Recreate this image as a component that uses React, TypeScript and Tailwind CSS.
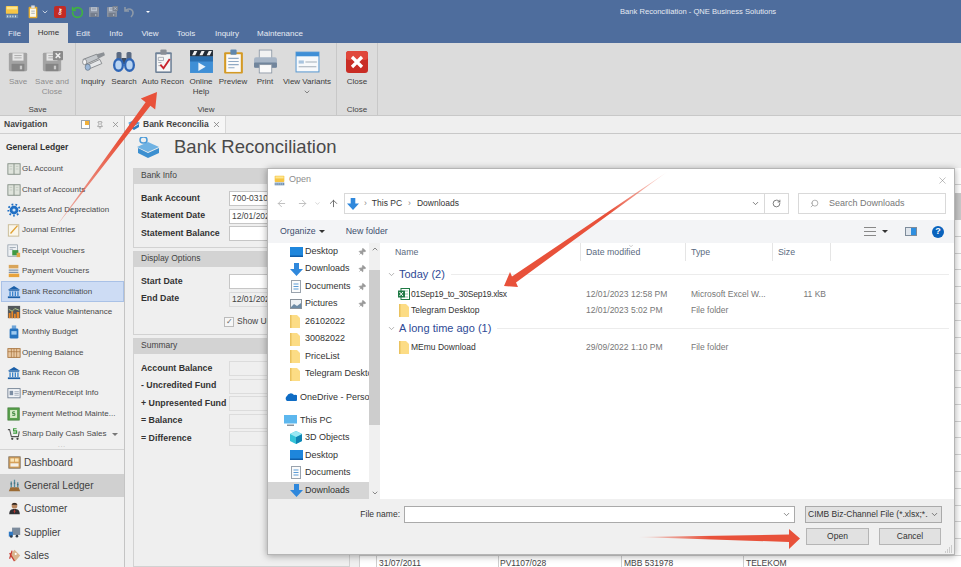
import type { ReactNode } from "react";
import { ArrowLeft, ArrowRight, ArrowUp, ChevronDown, ChevronUp, Pin, RotateCw, Search, X } from "lucide-react";

const FONT = { fontFamily: '"Liberation Sans", Arial, sans-serif' };

function Ico({ s = 14, vb = 16, children, className = "" }: { s?: number; vb?: number; children: ReactNode; className?: string }) {
  return (
    <svg width={s} height={s} viewBox={`0 0 ${vb} ${vb}`} className={`shrink-0 ${className}`}>
      {children}
    </svg>
  );
}

/* ---------- ribbon icons (24 box) ---------- */
function Floppy({ s = 22, badge = false }: { s?: number; badge?: boolean }) {
  return (
    <Ico s={s} vb={24}>
      <rect x="2" y="2" width="20" height="20" rx="1.5" fill="#a3a3a3" />
      <rect x="6" y="2.5" width="12" height="8" fill="#e6e6e6" />
      <rect x="8" y="4.5" width="8" height="1" fill="#a9a9a9" />
      <rect x="8" y="7" width="8" height="1" fill="#a9a9a9" />
      <rect x="5" y="14" width="14" height="8" fill="#858585" />
      <rect x="14" y="16" width="2.5" height="4" fill="#c9c9c9" />
      {badge && (
        <>
          <rect x="13" y="0" width="11" height="10" rx="1" fill="#8a8a8a" />
          <path d="M16 2.5l5 5M21 2.5l-5 5" stroke="#eee" strokeWidth="1.6" />
        </>
      )}
    </Ico>
  );
}

function Telescope() {
  return (
    <Ico s={25} vb={24}>
      <path d="M2 10l13-5 2 4-13 6z" fill="#c4c8cc" stroke="#6e7276" strokeWidth=".7" />
      <path d="M5 16l13-6 2 4-12 5z" fill="#e6e8ea" stroke="#6e7276" strokeWidth=".7" />
      <path d="M15 5l7-2 1 3-6 3z" fill="#8c9095" />
      <ellipse cx="6.500" cy="17.500" rx="2.500" ry="3" fill="#9db8d8" stroke="#5c6b7c" strokeWidth=".6" />
      <ellipse cx="3.500" cy="12.500" rx="2" ry="2.600" fill="#f2f2f2" stroke="#6e7276" strokeWidth=".6" />
    </Ico>
  );
}

function Binoculars() {
  return (
    <Ico s={24} vb={24}>
      <rect x="4.500" y="2" width="5" height="8" rx="1.500" fill="#5a6a82" />
      <rect x="14.500" y="2" width="5" height="8" rx="1.500" fill="#5a6a82" />
      <rect x="9.500" y="8" width="5" height="6" fill="#3f4d63" />
      <ellipse cx="6.500" cy="15" rx="5.500" ry="7" fill="#2f66b6" />
      <ellipse cx="17.500" cy="15" rx="5.500" ry="7" fill="#2f66b6" />
      <ellipse cx="6.500" cy="15" rx="3.200" ry="4.600" fill="#b9d4f2" />
      <ellipse cx="17.500" cy="15" rx="3.200" ry="4.600" fill="#b9d4f2" />
    </Ico>
  );
}

function ClipRecon() {
  return (
    <Ico s={25} vb={24}>
      <rect x="4" y="3" width="16" height="20" rx="1" fill="#6f8298" />
      <rect x="5.500" y="5" width="13" height="16.500" fill="#f5f5f5" />
      <rect x="9" y="0.500" width="6" height="5" rx="1" fill="#8a8f96" />
      <path d="M7 8h5v3H7zM7 13h3M7 16h3" stroke="#9ca3ad" strokeWidth=".8" fill="none" />
      <path d="M9 15l3 3.500 6-9" stroke="#c8232c" strokeWidth="1.800" fill="none" />
    </Ico>
  );
}

function Clapper() {
  return (
    <Ico s={25} vb={24}>
      <rect x="1" y="7" width="22" height="16" fill="#3f8fd6" />
      <rect x="1" y="7" width="22" height="5" fill="#2a6fb0" />
      <rect x="1" y="1" width="22" height="6" fill="#222b36" />
      <path d="M3 6l2-4h3l-2 4zM10 6l2-4h3l-2 4zM17 6l2-4h3l-2 4z" fill="#f1f1f1" />
      <path d="M9 13l7 4-7 4z" fill="#e9f3fb" />
    </Ico>
  );
}

function Preview() {
  return (
    <Ico s={25} vb={24}>
      <rect x="3" y="3" width="18" height="20.500" rx="1" fill="#d49a25" />
      <rect x="5" y="5" width="14" height="17" fill="#fbfbfb" />
      <rect x="9" y="0.500" width="6" height="5" rx="1" fill="#5f87ad" />
      <path d="M7 9h10M7 12h10M7 15h10M7 18h6" stroke="#8fa9c4" strokeWidth="1" />
    </Ico>
  );
}

function Printer() {
  return (
    <Ico s={25} vb={24}>
      <rect x="6" y="1" width="12" height="9" fill="#f2f2f2" stroke="#8995a3" strokeWidth=".8" />
      <rect x="1" y="8" width="22" height="10" rx="2" fill="#a7b5c6" />
      <rect x="1" y="13" width="22" height="5" rx="1" fill="#71859c" />
      <rect x="6" y="15" width="12" height="8" fill="#fafafa" stroke="#8995a3" strokeWidth=".8" />
    </Ico>
  );
}

function Variants() {
  return (
    <Ico s={25} vb={24}>
      <rect x="1" y="3" width="22" height="19" fill="#f7f9fb" stroke="#5d9bd1" strokeWidth="1" />
      <rect x="1" y="3" width="22" height="4" fill="#3f8fd6" />
      <rect x="3.500" y="11" width="5" height="3" fill="#a8c4df" />
      <path d="M10 12.500h11M3.500 17h17" stroke="#a2adb8" strokeWidth="1" />
    </Ico>
  );
}

function CloseRed() {
  return (
    <Ico s={24} vb={24}>
      <rect x="1" y="1" width="22" height="22" rx="3" fill="#c92d25" />
      <rect x="1" y="1" width="22" height="9" rx="3" fill="#e0473b" />
      <path d="M7 7l10 10M17 7L7 17" stroke="#fff" strokeWidth="3.200" />
    </Ico>
  );
}

/* ---------- quick access + nav icons ---------- */
function Monitor({ s = 14 }: { s?: number }) {
  return (
    <Ico s={s}>
      <rect x="1" y="1" width="14" height="9" rx="1" fill="#f6c544" />
      <rect x="2" y="2" width="12" height="3" fill="#fde68f" />
      <rect x="1" y="11" width="14" height="4" fill="#6f8fb0" />
      <path d="M3 12v2M6 12v2M9 12v2M12 12v2" stroke="#e6edf5" strokeWidth="1" />
    </Ico>
  );
}

function QatClip() {
  return (
    <Ico s={14}>
      <rect x="3" y="2" width="10" height="13" rx="1" fill="#e3a92c" />
      <rect x="4.500" y="4" width="7" height="9.500" fill="#fbf7e7" />
      <rect x="6" y="0.500" width="4" height="3" fill="#d9dde3" />
      <path d="M6 7h4M6 9.500h4" stroke="#8a97a8" strokeWidth=".8" />
    </Ico>
  );
}

function Book() {
  return (
    <Ico>
      <rect x="1" y="2" width="14" height="12" fill="#dfe4dc" stroke="#7e8a80" strokeWidth="1" />
      <path d="M8 2v12" stroke="#7e8a80" strokeWidth="1" />
      <path d="M3 5h3M3 8h3M10 5h3M10 8h3" stroke="#b9c2b7" strokeWidth=".8" />
    </Ico>
  );
}

function Bank() {
  return (
    <Ico>
      <path d="M8 1L1 5.500h14z" fill="#1a5fa8" />
      <rect x="2" y="6" width="12" height="1" fill="#1a5fa8" />
      <path d="M3.500 7.500v5M6.500 7.500v5M9.500 7.500v5M12.500 7.500v5" stroke="#2d7cc9" strokeWidth="1.400" />
      <rect x="1" y="13" width="14" height="2" fill="#1a5fa8" />
    </Ico>
  );
}

const NAV_ICONS: Record<string, ReactNode> = {
  gl: <Book />,
  gear: (
    <Ico>
      <circle cx="8" cy="8" r="5" fill="#1f6fc4" />
      <circle cx="8" cy="8" r="6.500" fill="none" stroke="#1f6fc4" strokeWidth="2" strokeDasharray="2 2.500" />
      <circle cx="8" cy="8" r="1.800" fill="#cfe3f7" />
    </Ico>
  ),
  journal: (
    <Ico>
      <rect x="1.500" y="2" width="12" height="13" fill="#faf6ea" stroke="#c5b68f" strokeWidth="1" />
      <path d="M4 12l8-9" stroke="#e0a030" strokeWidth="1.500" />
    </Ico>
  ),
  receipt: (
    <Ico>
      <rect x="1" y="1" width="11" height="13" fill="#eef1f4" stroke="#8793a2" strokeWidth=".8" />
      <path d="M3 4h7M3 6h4" stroke="#8793a2" strokeWidth=".8" />
      <rect x="6" y="7" width="7" height="6" fill="#3f9a45" />
      <rect x="11" y="10" width="4" height="5" fill="#e0a94a" />
    </Ico>
  ),
  payment: (
    <Ico>
      <rect x="2" y="1" width="11" height="4" fill="#d9a55a" />
      <path d="M2 7h11M2 9.500h11" stroke="#7f93ab" strokeWidth="1.400" />
      <rect x="2" y="11" width="12" height="4" fill="#e8a33c" />
    </Ico>
  ),
  bank: <Bank />,
  stock: (
    <Ico>
      <rect x="1" y="1" width="14" height="14" fill="#54585c" />
      <path d="M2 15V9h2v6zM5 15V7h2v8zM8 15V10h2v5zM11 15V8h3v7z" fill="#e8882a" />
      <path d="M2 5l4 2 3-3 5 2" stroke="#b6d28a" strokeWidth="1" fill="none" />
    </Ico>
  ),
  budget: (
    <Ico>
      <rect x="5.500" y="0.500" width="5" height="4" fill="#6fa5d8" />
      <rect x="3" y="4" width="10" height="11.500" rx="1.500" fill="#2673bf" />
      <rect x="5" y="7" width="6" height="4" fill="#9fcaf0" />
    </Ico>
  ),
  opening: (
    <Ico>
      <rect x="1" y="3" width="14" height="10" fill="#e8c7a0" stroke="#a8743e" strokeWidth="1" />
      <path d="M5 3v10M8 3v10M11 3v10M1 6.500h14" stroke="#a8743e" strokeWidth=".8" />
    </Ico>
  ),
  info: (
    <Ico>
      <rect x="1" y="3" width="14" height="10.500" fill="#f2f4f7" stroke="#6e7d90" strokeWidth="1" />
      <rect x="3" y="5.500" width="4" height="5" fill="#7d8ea3" />
      <path d="M8.500 6.500h5M8.500 8.500h5M8.500 10.500h5" stroke="#8b98a8" strokeWidth=".8" />
    </Ico>
  ),
  method: (
    <Ico>
      <rect x="1" y="1" width="13" height="14" fill="#5aa04d" stroke="#3d7a35" strokeWidth=".8" />
      <rect x="3.500" y="3.500" width="8" height="9" fill="#d8ecc9" />
      <path d="M9 5.500H6.500v2H9v2H6" stroke="#2c7a2c" strokeWidth="1" fill="none" />
    </Ico>
  ),
  cart: (
    <Ico>
      <path d="M1 3h2l2 8h8l1-6" stroke="#555" strokeWidth="1.200" fill="none" />
      <circle cx="6" cy="13.500" r="1.300" fill="#444" />
      <circle cx="12" cy="13.500" r="1.300" fill="#444" />
      <path d="M11 2H7.500v2.500H11V7H7" stroke="#3a9a3a" strokeWidth="1.300" fill="none" />
    </Ico>
  ),
};

const NAV_ITEMS: [string, string][] = [
  ["gl", "GL Account"],
  ["gl", "Chart of Accounts"],
  ["gear", "Assets And Depreciation"],
  ["journal", "Journal Entries"],
  ["receipt", "Receipt Vouchers"],
  ["payment", "Payment Vouchers"],
  ["bank", "Bank Reconciliation"],
  ["stock", "Stock Value Maintenance"],
  ["budget", "Monthly Budget"],
  ["opening", "Opening Balance"],
  ["bank", "Bank Recon OB"],
  ["info", "Payment/Receipt Info"],
  ["method", "Payment Method Mainte..."],
  ["cart", "Sharp Daily Cash Sales"],
];

const MODULES: [ReactNode, string, boolean][] = [
  [
    <Ico s={13} key="d">
      <rect x="1" y="1" width="14" height="14" fill="#d6a15a" stroke="#7b6a55" strokeWidth="1" />
      <rect x="3" y="3" width="4.500" height="4" fill="#fbe6b8" />
      <rect x="8.500" y="3" width="4.500" height="4" fill="#fbe6b8" />
      <rect x="3" y="9" width="10" height="4" fill="#f4f1ea" />
    </Ico>,
    "Dashboard",
    false,
  ],
  [
    <Ico s={13} key="g">
      <path d="M1 15l2-5h10l2 5z" fill="#9b6b34" />
      <path d="M4 10V3M8 10V1M12 10V4" stroke="#4f8d9c" strokeWidth="1.600" />
      <path d="M3 6h2M7 5h2M11 7h2" stroke="#4a5968" strokeWidth="1" />
    </Ico>,
    "General Ledger",
    true,
  ],
  [
    <Ico s={13} key="c">
      <circle cx="8" cy="4.500" r="3.500" fill="#b8865f" />
      <path d="M4.500 3.500C5 0.500 11 0.500 11.500 3.500z" fill="#2c2521" />
      <path d="M1.500 15c0-5 2.500-6.500 6.500-6.500s6.500 1.500 6.500 6.500z" fill="#2f2f33" />
      <path d="M8 8.500l-1 3 1 3 1-3z" fill="#b3352d" />
    </Ico>,
    "Customer",
    false,
  ],
  [
    <Ico s={13} key="s">
      <rect x="5" y="2" width="10" height="9" fill="#7c8b9c" />
      <path d="M1 7h5v6H1z" fill="#2d78c4" />
      <circle cx="4" cy="13" r="1.600" fill="#2f3b48" />
      <circle cx="11" cy="12.500" r="1.600" fill="#2f3b48" />
    </Ico>,
    "Supplier",
    false,
  ],
  [
    <Ico s={13} key="a">
      <path d="M8 1l7 7-6 7-7-7z" fill="#d9b48e" />
      <path d="M2 5l6 10M5 2l-3 10" stroke="#c73c32" strokeWidth="1.500" />
      <circle cx="9.500" cy="6" r="1.300" fill="#fff" />
    </Ico>,
    "Sales",
    false,
  ],
];

const RIBBON_VIEW: [ReactNode, string[], number][] = [
  [<Telescope key="1" />, ["Inquiry"], 30],
  [<Binoculars key="2" />, ["Search"], 32],
  [<ClipRecon key="3" />, ["Auto Recon"], 46],
  [<Clapper key="4" />, ["Online", "Help"], 30],
  [<Preview key="5" />, ["Preview"], 34],
  [<Printer key="6" />, ["Print"], 30],
  [<Variants key="7" />, ["View Variants"], 54],
];

const TABS: [string, number][] = [
  ["File", 29],
  ["Home", 39],
  ["Edit", 30],
  ["Info", 36],
  ["View", 32],
  ["Tools", 40],
  ["Inquiry", 42],
  ["Maintenance", 64],
];

function RibbonBtn({ icon, lines, w, muted, chevron }: { icon: ReactNode; lines: string[]; w: number; muted?: boolean; chevron?: boolean }) {
  return (
    <div style={{ width: w }} className={`flex flex-col items-center pt-[5px] text-[8px] leading-[10px] whitespace-nowrap ${muted ? "text-[#8d8d8d]" : "text-[#3c3c3c]"}`}>
      <div className="flex h-[27px] items-center justify-center">{icon}</div>
      <div className="mt-[2px]">{lines[0]}</div>
      {lines[1] && <div>{lines[1]}</div>}
      {chevron && <ChevronDown size={8} className="mt-[1px] text-[#555]" />}
    </div>
  );
}

function RibbonGroup({ title, w, children }: { title: string; w: number; children: ReactNode }) {
  return (
    <div style={{ width: w }} className="flex h-full flex-col border-r border-[#c8c8c8]">
      <div className="flex flex-1">{children}</div>
      <div className="text-center text-[8px] leading-[11px] text-[#444]">{title}</div>
    </div>
  );
}

function Field({ label, value, disabled }: { label: string; value?: string; disabled?: boolean }) {
  return (
    <div className="flex h-[15px] items-center">
      <div className="w-[88px] shrink-0 whitespace-nowrap text-[8.800px] font-bold text-[#333]">{label}</div>
      <div className={`h-[15px] w-[120px] border px-[2px] text-[8.500px] leading-[13px] text-[#444] ${disabled ? "border-[#dcdcdc] bg-[#efefef]" : "border-[#c6c6c6] bg-white"}`}>{value}</div>
    </div>
  );
}

function Panel({ title, grow, children }: { title: string; grow?: boolean; children: ReactNode }) {
  return (
    <div className={`border border-[#d2d2d2] ${grow ? "flex-1" : ""}`}>
      <div className="h-[15px] bg-[#d3d3d3] pl-[7px] text-[8.500px] leading-[13px] text-[#444]">{title}</div>
      <div className="flex flex-col gap-[2.500px] pt-[7px] pb-[6px] pl-[7px]">{children}</div>
    </div>
  );
}

function Sidebar() {
  return (
    <div className="flex w-[125px] shrink-0 flex-col overflow-hidden border-r border-[#c4c4c4] bg-[#f0f0f0]">
      <div className="flex h-[18px] shrink-0 items-center border-b border-[#cfcfcf] pl-[4px] pr-[4px] text-[8.500px] font-bold text-[#444]">
        <span className="flex-1">Navigation</span>
        <svg width="9" height="9" viewBox="0 0 9 9" className="mr-[6px]">
          <rect x=".5" y=".5" width="8" height="8" fill="#fff" stroke="#9aa3ad" />
          <rect x="4" y="1" width="4" height="4" fill="#f2b13a" />
        </svg>
        <Pin size={8} className="mr-[7px] text-[#888]" />
        <X size={9} className="text-[#888]" />
      </div>
      <div className="flex h-[26px] shrink-0 items-center pl-[6px] text-[8.500px] font-bold text-[#333]">General Ledger</div>
      <div className="-mt-[1px] flex flex-col">
        {NAV_ITEMS.map(([ic, label], i) => (
          <div key={label} className={`flex h-[20.400px] items-center gap-[1px] text-[8px] whitespace-nowrap text-[#4a4a4a] ${label === "Bank Reconciliation" ? "ml-[1px] border border-[#a9c1e6] bg-[#cddcf4] pl-[5px]" : "pl-[7px]"}`}>
            {NAV_ICONS[ic]}
            <span className="flex-1">{label}</span>
            {i === 13 && <span className="mr-[6px] h-0 w-0 border-x-[3px] border-t-[3px] border-x-transparent border-t-[#777]" />}
          </div>
        ))}
      </div>
      <div className="flex h-[5px] shrink-0 items-start justify-center text-[6px] leading-[3px] tracking-[1px] text-[#999]">...</div>
      <div className="flex flex-col border-t border-[#d4d4d4]">
        {MODULES.map(([icon, label, active]) => (
          <div key={label} className={`flex h-[23.400px] items-center gap-[3px] pl-[8px] text-[10px] text-[#3f3f3f] ${active ? "bg-[#d0d0d0]" : ""}`}>
            {icon}
            <span>{label}</span>
          </div>
        ))}
      </div>
    </div>
  );
}

function LeftForms() {
  return (
    <div className="flex w-[217px] shrink-0 flex-col gap-[3px]">
      <Panel title="Bank Info">
        <Field label="Bank Account" value="700-0310-" />
        <Field label="Statement Date" value="12/01/2023" />
        <Field label="Statement Balance" />
      </Panel>
      <Panel title="Display Options">
        <Field label="Start Date" />
        <Field label="End Date" value="12/01/2023" disabled />
        <div className="mt-[6px] flex h-[13px] items-center pl-[83px] text-[8.500px] text-[#444]">
          <span className="mr-[3px] flex h-[10px] w-[10px] items-center justify-center border border-[#bbb] bg-[#f6f6f6] text-[8px] leading-none text-[#666]">✓</span>
          Show Un
        </div>
      </Panel>
      <Panel title="Summary" grow>
        <Field label="Account Balance" disabled />
        <Field label="- Uncredited Fund" disabled />
        <Field label="+ Unpresented Fund" disabled />
        <Field label="= Balance" disabled />
        <Field label="= Difference" disabled />
      </Panel>
    </div>
  );
}

function BackTable() {
  return (
    <div className="ml-[9px] flex-1 border-l border-[#d0d0d0] bg-white text-[8.500px] text-[#444]">
      <div className="h-[17px] border-b border-[#d4d4d4]" />
      <div className="h-[8px]" />
      <div className="h-[27px] bg-[#c9c9c9]" />
      {Array.from({ length: 20 }).map((_, i) => (
        <div key={i} className="h-[16.800px] border-b border-[#d4d4d4]" />
      ))}
      <div className="grid h-[16.800px] grid-cols-[16px_122px_123px_122px_1fr] leading-[14px]">
        <div />
        <div className="border-l border-[#cfcfcf] pl-[2px]">31/07/2011</div>
        <div className="border-l border-[#cfcfcf] pl-[1px]">PV1107/028</div>
        <div className="border-l border-[#cfcfcf] pl-[2px]">MBB 531978</div>
        <div className="border-l border-[#cfcfcf] pl-[2px]">TELEKOM</div>
      </div>
    </div>
  );
}

/* ---------- file dialog ---------- */
function Folder() {
  return (
    <svg width="10" height="13" viewBox="0 0 10 13" className="shrink-0">
      <path d="M0 0h7l3 3v10H0z" fill="#fcdc85" />
      <path d="M0 0h1.500v13H0z" fill="#eac25f" />
    </svg>
  );
}

function DownArrow({ s = 13 }: { s?: number }) {
  return (
    <svg width={s} height={s} viewBox="0 0 13 13" className="shrink-0">
      <path d="M4 0h5v6h4l-6.500 7L0 6h4z" fill="#2f88dc" />
    </svg>
  );
}

function DesktopIco() {
  return (
    <svg width="13" height="10" viewBox="0 0 13 10" className="shrink-0">
      <rect width="13" height="10" fill="#1e86dc" />
      <rect y="8.500" width="13" height="1.500" fill="#0e5ca8" />
    </svg>
  );
}

function DocIco() {
  return (
    <svg width="10" height="13" viewBox="0 0 10 13" className="ml-[1px] shrink-0">
      <rect x=".5" y=".5" width="9" height="12" fill="#fbfbfb" stroke="#9aa3ad" />
      <path d="M2.500 4h5M2.500 6.500h5M2.500 9h5" stroke="#5b9bd5" strokeWidth="1" />
    </svg>
  );
}

function PicIco() {
  return (
    <svg width="12" height="10" viewBox="0 0 12 10" className="shrink-0">
      <rect x=".5" y=".5" width="11" height="9" fill="#eef1f4" stroke="#8a929b" />
      <path d="M1 8l3-3 3 2 4-3v5H1z" fill="#6c8aa5" />
    </svg>
  );
}

function Cube() {
  return (
    <svg width="12" height="13" viewBox="0 0 12 13" className="shrink-0">
      <path d="M6 0l6 3v7l-6 3-6-3V3z" fill="#35c3d8" />
      <path d="M6 6v7l6-3V3z" fill="#0f84b4" />
      <path d="M6 0l6 3-6 3-6-3z" fill="#9ae8f3" />
    </svg>
  );
}

const QUICK: [ReactNode, string, boolean][] = [
  [<DesktopIco key="a" />, "Desktop", true],
  [<DownArrow key="b" />, "Downloads", true],
  [<DocIco key="c" />, "Documents", true],
  [<PicIco key="d" />, "Pictures", true],
  [<Folder key="e" />, "26102022", false],
  [<Folder key="f" />, "30082022", false],
  [<Folder key="g" />, "PriceList", false],
  [<Folder key="h" />, "Telegram Desktop", false],
];

const PC: [ReactNode, string, boolean][] = [
  [<Cube key="a" />, "3D Objects", false],
  [<DesktopIco key="b" />, "Desktop", false],
  [<DocIco key="c" />, "Documents", false],
  [<DownArrow key="d" />, "Downloads", false],
];

function TreeRow({ icon, label, pin, active }: { icon: ReactNode; label: string; pin?: boolean; active?: boolean }) {
  return (
    <div className={`flex h-[17.500px] items-center pl-[22px] text-[9px] text-[#333] ${active ? "bg-[#d5d5d5]" : ""}`}>
      <span className="flex w-[15px] shrink-0">{icon}</span>
      <span className="flex-1 overflow-hidden whitespace-nowrap">{label}</span>
      {pin && <Pin size={8} className="mr-[3px] shrink-0 rotate-45 fill-[#999] text-[#999]" />}
    </div>
  );
}

function FileRow({ icon, name, date, type, size, tight }: { icon: ReactNode; name: string; date: string; type: string; size?: string; tight?: boolean }) {
  return (
    <div className="flex h-[16px] items-center text-[8.500px] whitespace-nowrap">
      <span className="ml-[15px] flex w-[16px] shrink-0 justify-center pl-[2px]">{icon}</span>
      <span className={`w-[175px] shrink-0 text-[#333] ${tight ? "tracking-[-0.25px]" : ""}`}>{name}</span>
      <span className="w-[105px] shrink-0 text-[#777]">{date}</span>
      <span className="w-[87px] shrink-0 text-[#777]">{type}</span>
      <span className="w-[48px] text-right text-[#777]">{size}</span>
    </div>
  );
}

function GroupRow({ label, h }: { label: string; h: number }) {
  return (
    <div style={{ height: h }} className="flex items-center pl-[7px] pr-[5px] text-[11px] text-[#2e4a96]">
      <ChevronDown size={9} className="mr-[3px] text-[#999]" />
      <span className="whitespace-nowrap">{label}</span>
      <span className="ml-[6px] h-px flex-1 bg-[#ececec]" />
    </div>
  );
}

function OpenDialog() {
  return (
    <div className="absolute top-[168px] left-[267px] z-10 flex h-[387px] w-[688px] flex-col border border-[#b5b5b5] bg-white shadow-[0_1px_7px_rgba(0,0,0,0.35)]">
      <div className="flex h-[22px] shrink-0 items-center pl-[6px] pr-[6px] text-[9px] text-[#8d8d8d]">
        <Monitor s={11} />
        <span className="ml-[4px] flex-1">Open</span>
        <X size={11} strokeWidth={1} className="text-[#777]" />
      </div>
      <div className="flex h-[29px] shrink-0 items-start pt-[2px]">
        <div className="flex h-[21px] w-[76px] items-center pl-[8px] text-[#bbb]">
          <ArrowLeft size={11} className="mr-[10px]" />
          <ArrowRight size={11} className="mr-[6px]" />
          <ChevronDown size={7} className="mr-[7px]" />
          <ArrowUp size={11} className="text-[#666]" />
        </div>
        <div className="flex h-[21px] w-[445px] items-center border border-[#d9d9d9] pl-[2px] text-[8.500px] text-[#333]">
          <DownArrow s={12} />
          <span className="mx-[5px] text-[#888]">›</span>
          <span>This PC</span>
          <span className="mx-[6px] text-[#888]">›</span>
          <span className="flex-1">Downloads</span>
          <span className="flex h-full w-[11px] items-center"><ChevronDown size={9} className="text-[#555]" /></span>
          <span className="ml-[2px] flex h-full w-[24px] items-center justify-center border-l border-[#d9d9d9]"><RotateCw size={9} className="text-[#555]" /></span>
        </div>
        <div className="ml-[9px] flex h-[21px] w-[148px] items-center border border-[#d9d9d9] pl-[11px] text-[9px] text-[#777]">
          <Search size={9} className="mr-[10px] -scale-x-100 text-[#999]" />
          Search Downloads
        </div>
      </div>
      <div className="flex h-[23px] shrink-0 items-center bg-[#f3f4f6] pl-[12px] pr-[10px] text-[8.800px] text-[#3d4f6e]">
        <span>Organize</span>
        <span className="ml-[3px] h-0 w-0 border-x-[3px] border-t-[3px] border-x-transparent border-t-[#333]" />
        <span className="ml-[21px] flex-1">New folder</span>
        <span className="mr-[6px] flex h-[9px] w-[12px] flex-col justify-between">
          <span className="h-px bg-[#888]" />
          <span className="h-px bg-[#888]" />
          <span className="h-px bg-[#888]" />
        </span>
        <span className="mr-[17px] h-0 w-0 border-x-[3px] border-t-[3px] border-x-transparent border-t-[#333]" />
        <span className="mr-[15px] flex h-[9px] w-[12px] justify-end border border-[#7d8b9a] bg-[#dfe5ec]"><span className="w-[5px] bg-[#2f8fe0]" /></span>
        <span className="flex h-[12px] w-[12px] items-center justify-center rounded-full bg-[#0a63bd] text-[9px] leading-none font-bold text-white">?</span>
      </div>
      <div className="flex min-h-0 flex-1">
        <div className="flex w-[101px] shrink-0 flex-col overflow-hidden">
          {QUICK.map(([ic, l, p]) => (
            <TreeRow key={l} icon={ic} label={l} pin={p} />
          ))}
          <div className="h-[6px] shrink-0" />
          <div className="flex h-[17.500px] items-center gap-[3px] pl-[16px] text-[9px] whitespace-nowrap text-[#333]">
            <svg width="13" height="8" viewBox="0 0 13 8" className="shrink-0">
              <path d="M3 8a3 3 0 010-5 4 4 0 017-1 3 3 0 012 6z" fill="#0f6cc4" />
            </svg>
            OneDrive - Personal
          </div>
          <div className="h-[5.500px] shrink-0" />
          <div className="flex h-[17.500px] items-center gap-[3px] pl-[16px] text-[9px] text-[#333]">
            <svg width="13" height="11" viewBox="0 0 13 11" className="shrink-0">
              <rect width="13" height="8.500" fill="#5db7ee" />
              <rect x="3" y="9.500" width="7" height="1.500" fill="#8a939c" />
            </svg>
            This PC
          </div>
          {PC.map(([ic, l], i) => (
            <TreeRow key={l} icon={ic} label={l} active={i === 3} />
          ))}
        </div>
        <div className="flex w-[11px] shrink-0 flex-col items-center bg-[#f0f0f0]">
          <ChevronUp size={8} className="mt-[2px] h-[8px] text-[#555]" />
          <div className="mt-[17px] h-[155px] w-full bg-[#cdcdcd]" />
          <div className="flex-1" />
          <ChevronDown size={8} className="mb-[2px] text-[#555]" />
        </div>
        <div className="min-w-0 flex-1">
          <div className="flex h-[19px] items-start text-[8.800px] text-[#5a6a80]">
            <span className="w-[201px] border-r border-[#e5e5e5] pl-[15px] leading-[18px]">Name</span>
            <span className="relative w-[105px] border-r border-[#e5e5e5] pl-[5px] leading-[18px]">
              Date modified
              <ChevronUp size={6} className="absolute top-0 left-[47px] rotate-180 text-[#999]" />
            </span>
            <span className="w-[87px] border-r border-[#e5e5e5] pl-[5px] leading-[18px]">Type</span>
            <span className="w-[58px] border-r border-[#e5e5e5] pl-[5px] leading-[18px]">Size</span>
          </div>
          <GroupRow label="Today (2)" h={24} />
          <FileRow
            icon={
              <svg width="12" height="12" viewBox="0 0 12 12">
                <rect x="3" y="0.500" width="8.500" height="11" fill="#fff" stroke="#1f7a45" />
                <path d="M7 3h3M7 6h3M7 9h3" stroke="#8fc3a5" />
                <rect y="2.500" width="7" height="7" fill="#1f7a45" />
                <path d="M1.500 4l3.500 4M5 4L1.500 8" stroke="#fff" strokeWidth="1" />
              </svg>
            }
            name="01Sep19_to_30Sep19.xlsx"
            date="12/01/2023 12:58 PM"
            type="Microsoft Excel W..."
            size="11 KB"
            tight
          />
          <FileRow icon={<Folder />} name="Telegram Desktop" date="12/01/2023 5:02 PM" type="File folder" />
          <GroupRow label="A long time ago (1)" h={21} />
          <FileRow icon={<Folder />} name="MEmu Download" date="29/09/2022 1:10 PM" type="File folder" />
        </div>
      </div>
      <div className="relative h-[55px] shrink-0 bg-[#f0f0f0] text-[8.500px] text-[#333]">
        <div className="flex items-center pt-[7px]">
          <span className="w-[132px] text-right">File name:</span>
          <div className="ml-[4px] flex h-[17px] w-[391px] items-center justify-end border border-[#aaa] bg-white pr-[3px]">
            <ChevronDown size={9} className="text-[#666]" />
          </div>
          <div className="ml-[10px] flex h-[17px] w-[137px] items-center border border-[#aaa] bg-[#e2e2e2] pl-[2px] whitespace-nowrap">
            <span className="flex-1 overflow-hidden">CIMB Biz-Channel File (*.xlsx;*.:</span>
            <ChevronDown size={9} className="mx-[2px] shrink-0 text-[#555]" />
          </div>
        </div>
        <div className="mt-[5px] flex justify-end gap-[10px] pr-[13px]">
          <div className="flex h-[17px] w-[63px] items-center justify-center border border-[#b5b5b5] bg-[#e1e1e1]">Open</div>
          <div className="flex h-[17px] w-[62px] items-center justify-center border border-[#b5b5b5] bg-[#e1e1e1]">Cancel</div>
        </div>
        <svg width="8" height="8" viewBox="0 0 8 8" className="absolute right-[1px] bottom-[1px]">
          <path d="M6 1h1M4 3h1M6 3h1M2 5h1M4 5h1M6 5h1M0 7h1M2 7h1M4 7h1M6 7h1" stroke="#a8a8a8" strokeWidth="1" />
        </svg>
      </div>
    </div>
  );
}

function Arrows() {
  return (
    <svg width="961" height="567" viewBox="0 0 961 567" className="pointer-events-none absolute top-0 left-0 z-20">
      <defs>
        <linearGradient id="a1" gradientUnits="userSpaceOnUse" x1="55" y1="228" x2="120" y2="140">
          <stop offset="0" stopColor="#e8513a" stopOpacity=".35" />
          <stop offset="1" stopColor="#e8513a" />
        </linearGradient>
        <linearGradient id="a2" gradientUnits="userSpaceOnUse" x1="667" y1="172" x2="610" y2="212">
          <stop offset="0" stopColor="#e8513a" stopOpacity=".1" />
          <stop offset="1" stopColor="#e8513a" />
        </linearGradient>
        <linearGradient id="a3" gradientUnits="userSpaceOnUse" x1="638" y1="537" x2="710" y2="537">
          <stop offset="0" stopColor="#e8513a" stopOpacity=".1" />
          <stop offset="1" stopColor="#e8513a" />
        </linearGradient>
      </defs>
      <polygon points="55,228 145.600,102.200 140.800,98.600 157,92 155.200,109.400 150.400,105.800" fill="url(#a1)" />
      <polygon points="667,172 516,282.400 518,287 504,286 510,272 512,276.600" fill="url(#a2)" />
      <polygon points="638,537 789,534.500 789,529 800,538.500 789,549 789,542" fill="url(#a3)" />
    </svg>
  );
}

export default function App() {
  return (
    <div style={FONT} className="relative flex h-[567px] w-[961px] flex-col overflow-hidden bg-[#efefef]">
      {/* title bar + ribbon tabs */}
      <div className="h-[43px] shrink-0 bg-[#4e6d9d] text-[#e6ebf3]">
        <div className="flex h-[24px] items-center">
          <div className="flex w-[620px] shrink-0 items-center pl-[5px]">
            <Monitor />
            <span className="ml-[7px]"><QatClip /></span>
            <ChevronDown size={8} className="ml-[1px] text-white" />
            <span className="ml-[5px] flex h-[12px] w-[12px] items-center justify-center rounded-[2px] bg-[#c32a25] text-[8px] leading-none text-white">⚷</span>
            <span className="ml-[5px]"><RotateCw size={13} strokeWidth={3} className="-scale-x-100 text-[#3fb53f]" /></span>
            <span className="ml-[4px] opacity-70"><Floppy s={12} /></span>
            <span className="ml-[6px] opacity-70"><Floppy s={12} badge /></span>
            <svg width="12" height="12" viewBox="0 0 12 12" className="ml-[5px]">
              <path d="M2 1v4h4M2.500 4.500C6 1.500 10 3.500 10 7c0 2-1 3-2 4" stroke="#8d99a8" strokeWidth="1.600" fill="none" />
            </svg>
            <span className="ml-[11px] h-0 w-0 border-x-[2.500px] border-t-[2.500px] border-x-transparent border-t-white" />
          </div>
          <span className="text-[7.600px] whitespace-nowrap">Bank Reconciliation - QNE Business Solutions</span>
        </div>
        <div className="flex h-[19px]">
          {TABS.map(([t, w]) => (
            <div key={t} style={{ width: w }} className={`flex items-center justify-center text-[8px] ${t === "Home" ? "-mt-[1px] h-[20px] bg-[#dcdcdc] text-[#333]" : ""}`}>
              {t}
            </div>
          ))}
        </div>
      </div>

      {/* ribbon */}
      <div className="flex h-[73px] shrink-0 border-b border-[#c8c8c8] bg-[#dcdcdc]">
        <RibbonGroup title="Save" w={76}>
          <RibbonBtn icon={<Floppy />} lines={["Save"]} w={36} muted />
          <RibbonBtn icon={<Floppy badge />} lines={["Save and", "Close"]} w={32} muted />
        </RibbonGroup>
        <RibbonGroup title="View" w={261}>
          <div className="w-[2px]" />
          {RIBBON_VIEW.map(([icon, lines, w]) => (
            <RibbonBtn key={lines[0]} icon={icon} lines={lines} w={w} chevron={lines[0] === "View Variants"} />
          ))}
        </RibbonGroup>
        <RibbonGroup title="Close" w={41}>
          <RibbonBtn icon={<CloseRed />} lines={["Close"]} w={40} />
        </RibbonGroup>
      </div>

      {/* body */}
      <div className="flex min-h-0 flex-1">
        <Sidebar />
        <div className="flex min-w-0 flex-1 flex-col">
          <div className="flex h-[18px] shrink-0 border-b border-[#c8c8c8]">
            <div className="flex w-[101px] items-center border-r border-[#d8d8d8] bg-[#f6f6f6] pl-[3px] text-[8.500px] font-bold text-[#444]">
              <svg width="12" height="10" viewBox="0 0 12 10" className="mr-[3px]">
                <path d="M6 0l6 3-6 3-6-3z" fill="#4a9ad8" />
                <path d="M1 4l5 3 5-3v3L6 10 1 7z" fill="#2f7fc0" />
              </svg>
              <span className="flex-1 whitespace-nowrap">Bank Reconcilia</span>
              <X size={9} className="mr-[4px] text-[#777]" />
            </div>
          </div>
          <div className="flex h-[34px] shrink-0 items-center pb-[8px] pl-[12px] text-[18.500px] leading-none text-[#4a4a4a]">
            <svg width="23" height="21" viewBox="0 0 23 21" className="mr-[14px]">
              <path d="M11 5l11 5-11 5L0 10z" fill="#6fb2e3" />
              <path d="M1 11l10 5 11-5v5l-11 5L1 16z" fill="#3c8fd0" />
              <rect x="3" y="0" width="7" height="6" rx="3" fill="none" stroke="#4a9ad8" strokeWidth="1.500" />
            </svg>
            Bank Reconciliation
          </div>
          <div className="flex min-h-0 flex-1 pl-[8px]">
            <LeftForms />
            <BackTable />
          </div>
        </div>
      </div>

      <OpenDialog />
      <Arrows />
    </div>
  );
}
